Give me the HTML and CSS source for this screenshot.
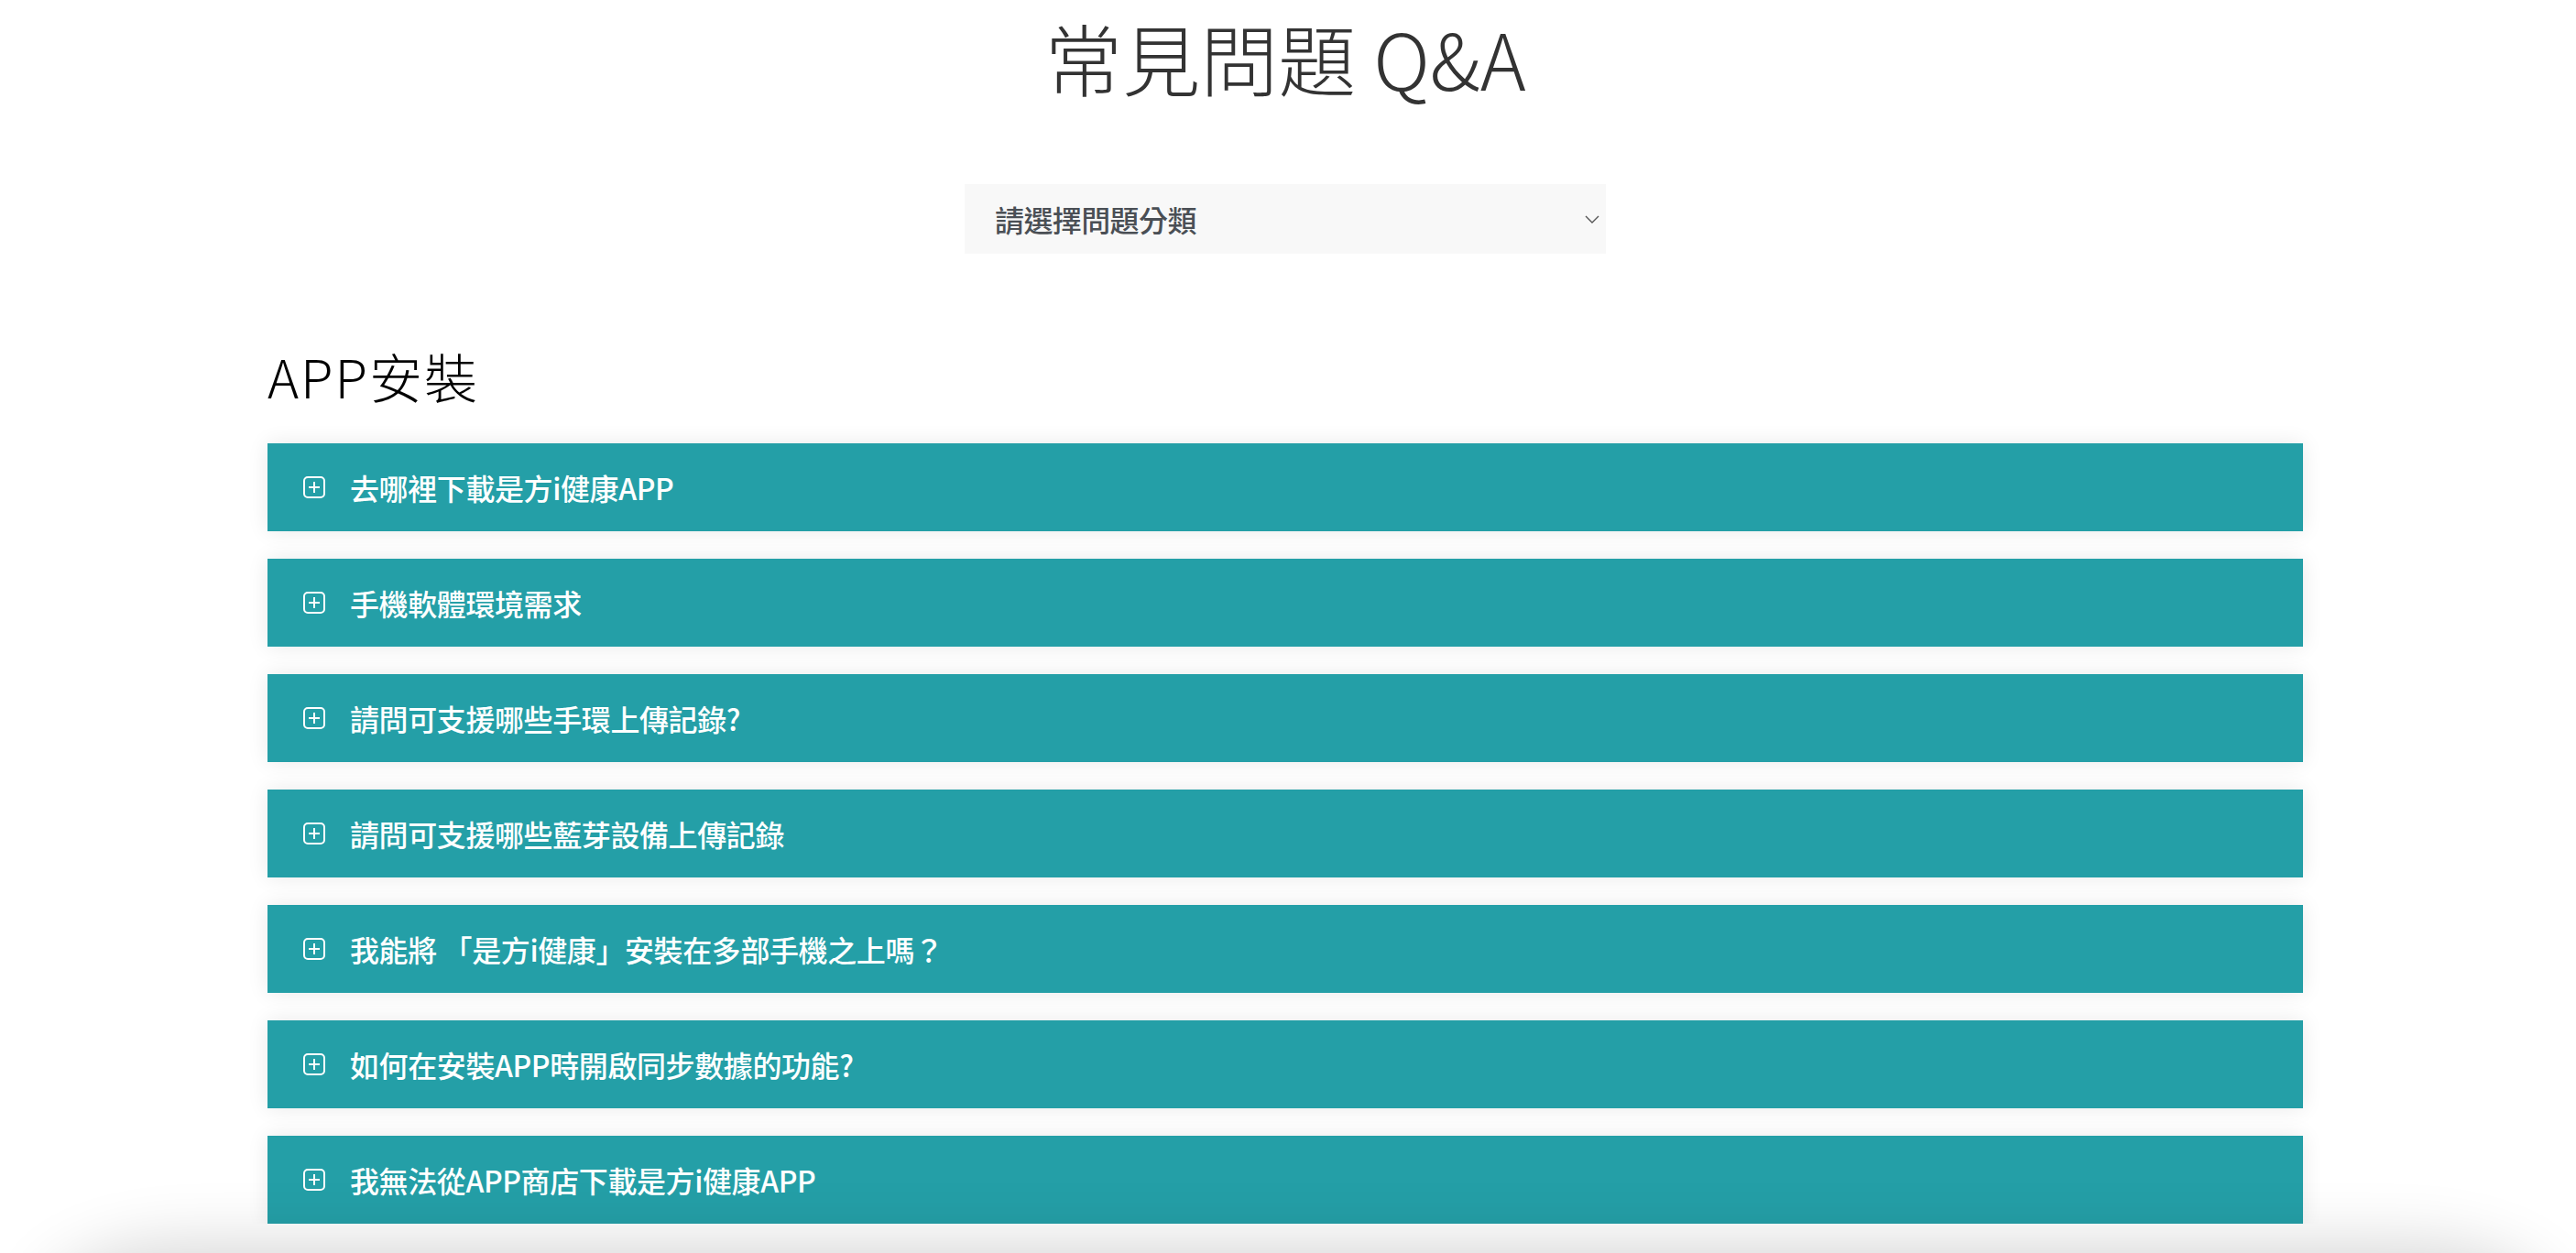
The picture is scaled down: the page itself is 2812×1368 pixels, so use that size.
FILE: index.html
```html
<!DOCTYPE html>
<html lang="zh-Hant">
<head>
<meta charset="utf-8">
<title>常見問題 Q&amp;A</title>
<link rel="stylesheet" href="styles.css">
</head>
<body>
<main class="page">
  <h1 class="page-title">常見問題 Q&amp;A</h1>

  <div class="filter-row">
    <div class="filter-select">
      <span class="filter-label">請選擇問題分類</span>
      <svg class="filter-caret" width="16" height="9" viewBox="0 0 16 9"><polyline points="1,1 8,8 15,1" fill="none" stroke="#555" stroke-width="1.4"/></svg>
    </div>
  </div>

  <section class="faq-group">
    <h2 class="group-title">APP安裝</h2>
    <ul class="faq-list">
      <li class="faq-item"><svg class="faq-icon" width="24" height="24" viewBox="0 0 24 24"><rect x="1" y="1" width="22" height="22" rx="4" fill="none" stroke="#fff" stroke-width="2"/><path d="M12 6v12M6 12h12" stroke="#fff" stroke-width="2"/></svg><span class="faq-q">去哪裡下載是方i健康APP</span></li>
      <li class="faq-item"><svg class="faq-icon" width="24" height="24" viewBox="0 0 24 24"><rect x="1" y="1" width="22" height="22" rx="4" fill="none" stroke="#fff" stroke-width="2"/><path d="M12 6v12M6 12h12" stroke="#fff" stroke-width="2"/></svg><span class="faq-q">手機軟體環境需求</span></li>
      <li class="faq-item"><svg class="faq-icon" width="24" height="24" viewBox="0 0 24 24"><rect x="1" y="1" width="22" height="22" rx="4" fill="none" stroke="#fff" stroke-width="2"/><path d="M12 6v12M6 12h12" stroke="#fff" stroke-width="2"/></svg><span class="faq-q">請問可支援哪些手環上傳記錄?</span></li>
      <li class="faq-item"><svg class="faq-icon" width="24" height="24" viewBox="0 0 24 24"><rect x="1" y="1" width="22" height="22" rx="4" fill="none" stroke="#fff" stroke-width="2"/><path d="M12 6v12M6 12h12" stroke="#fff" stroke-width="2"/></svg><span class="faq-q">請問可支援哪些藍芽設備上傳記錄</span></li>
      <li class="faq-item"><svg class="faq-icon" width="24" height="24" viewBox="0 0 24 24"><rect x="1" y="1" width="22" height="22" rx="4" fill="none" stroke="#fff" stroke-width="2"/><path d="M12 6v12M6 12h12" stroke="#fff" stroke-width="2"/></svg><span class="faq-q">我能將 「是方i健康」安裝在多部手機之上嗎？</span></li>
      <li class="faq-item"><svg class="faq-icon" width="24" height="24" viewBox="0 0 24 24"><rect x="1" y="1" width="22" height="22" rx="4" fill="none" stroke="#fff" stroke-width="2"/><path d="M12 6v12M6 12h12" stroke="#fff" stroke-width="2"/></svg><span class="faq-q">如何在安裝APP時開啟同步數據的功能?</span></li>
      <li class="faq-item"><svg class="faq-icon" width="24" height="24" viewBox="0 0 24 24"><rect x="1" y="1" width="22" height="22" rx="4" fill="none" stroke="#fff" stroke-width="2"/><path d="M12 6v12M6 12h12" stroke="#fff" stroke-width="2"/></svg><span class="faq-q">我無法從APP商店下載是方i健康APP</span></li>
    </ul>
  </section>
</main>
<div class="bottom-shade"></div>
</body>
</html>
```

FILE: styles.css
```css
html, body {
  margin: 0;
  padding: 0;
  background: #fff;
}

body {
  font-family: "Noto Sans CJK TC", "Noto Sans", sans-serif;
  overflow: hidden;
}

.page {
  padding: 0 298px 0 292px;
}

.page-title {
  margin: 0;
  text-align: center;
  font-size: 85px;
  line-height: 124px;
  font-weight: 300;
  color: #333;
}

.filter-row {
  margin-top: 77px;
  display: flex;
  justify-content: center;
}

.filter-select {
  box-sizing: border-box;
  width: 700px;
  height: 76px;
  background: #f8f8f8;
  display: flex;
  align-items: center;
  justify-content: space-between;
  padding: 0 7px 0 33px;
}

.filter-label {
  font-size: 32px;
  font-weight: 500;
  color: #4a4f55;
  letter-spacing: -0.6px;
}

.filter-caret {
  display: block;
}

.faq-group {
  margin-top: 98px;
}

.group-title {
  margin: 0 0 39px;
  font-size: 58px;
  line-height: 70px;
  font-weight: 300;
  color: #000;
  letter-spacing: 2px;
}

.faq-list {
  list-style: none;
  margin: 0;
  padding: 0;
  display: flex;
  flex-direction: column;
  gap: 30px;
}

.faq-item {
  height: 96px;
  background: #249fa7;
  box-shadow: 0 0 22px rgba(0, 0, 0, 0.09);
  display: flex;
  align-items: center;
  padding-left: 39px;
  gap: 27px;
}

.faq-icon {
  display: block;
  flex: none;
}

.faq-q {
  font-size: 32px;
  font-weight: 500;
  color: #fff;
  letter-spacing: -0.4px;
}

.bottom-shade {
  position: fixed;
  left: 60px;
  right: 40px;
  bottom: -120px;
  height: 120px;
  border-radius: 200px / 80px;
  box-shadow: 0 0 70px 10px rgba(0, 0, 0, 0.16);
  background: #e6e6e6;
}
```
